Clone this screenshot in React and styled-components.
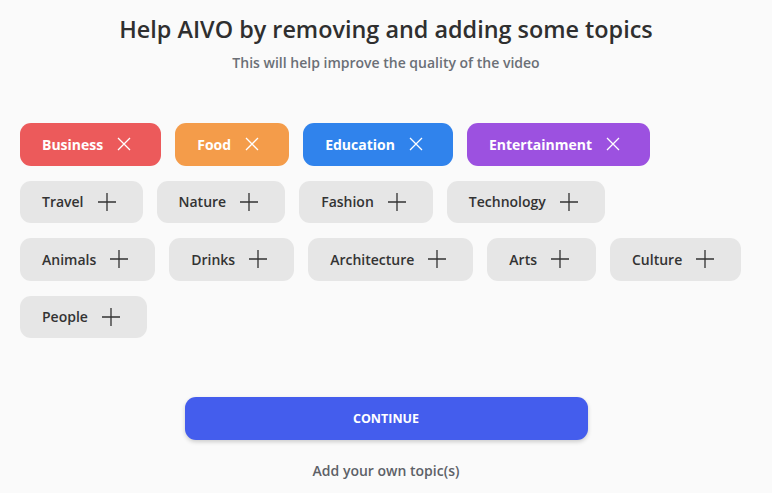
import React from 'react';
import styled, { createGlobalStyle } from 'styled-components';

const Global = createGlobalStyle`
  body {
    margin: 0;
    background: #fafafa;
    font-family: "Open Sans", "Noto Sans", sans-serif;
  }
`;

const Page = styled.div`
  width: 772px;
  height: 493px;
  padding: 14px 20px 0;
  box-sizing: border-box;
  display: flex;
  flex-direction: column;
`;

const Title = styled.h1`
  margin: 0;
  text-align: center;
  font-size: 23.4px;
  line-height: 30px;
  font-weight: 600;
  color: #2f2f2f;
`;

const Subtitle = styled.p`
  margin: 9px 0 0;
  text-align: center;
  font-size: 14px;
  line-height: 20px;
  font-weight: 600;
  color: #6b6f76;
`;

const Chips = styled.div`
  margin-top: 50px;
  display: flex;
  flex-wrap: wrap;
  gap: 15px 14px;
  width: 725px;
`;

const Chip = styled.button`
  height: 42.5px;
  box-sizing: border-box;
  padding: 0 ${(p) => (p.$color ? 30 : 27)}px 0 22px;
  border: none;
  border-radius: 11px;
  display: flex;
  align-items: center;
  gap: 14px;
  font-family: inherit;
  font-size: 14px;
  font-weight: ${(p) => (p.$color ? 700 : 600)};
  color: ${(p) => (p.$color ? '#ffffff' : '#333333')};
  background: ${(p) => p.$color || '#e6e6e6'};
`;

const Footer = styled.div`
  margin-top: 59px;
  display: flex;
  flex-direction: column;
  align-items: center;
`;

const ContinueBtn = styled.button`
  width: 403px;
  height: 43px;
  border: none;
  border-radius: 11px;
  background: #445ded;
  box-shadow: 0 2px 4px rgba(0, 0, 0, 0.18);
  color: #ffffff;
  font-family: inherit;
  font-size: 12.5px;
  font-weight: 700;
`;

const AddOwn = styled.div`
  margin-top: 21px;
  font-size: 14px;
  line-height: 20px;
  font-weight: 600;
  color: #5d6167;
`;

const CloseIcon = () => (
  <svg width="14" height="14" viewBox="0 0 14 14" fill="none">
    <path d="M1 1L13 13M13 1L1 13" stroke="#fff" strokeWidth="1.3" />
  </svg>
);

const PlusIcon = () => (
  <svg width="18" height="18" viewBox="0 0 18 18" fill="none">
    <path d="M9 0V18M0 9H18" stroke="#333" strokeWidth="1.3" />
  </svg>
);

const selected = [
  { name: 'Business', color: '#ec5a5b' },
  { name: 'Food', color: '#f49c4a' },
  { name: 'Education', color: '#3083ec' },
  { name: 'Entertainment', color: '#9c51e0' },
];

const others = [
  'Travel',
  'Nature',
  'Fashion',
  'Technology',
  'Animals',
  'Drinks',
  'Architecture',
  'Arts',
  'Culture',
  'People',
];

export default function App() {
  return (
    <>
      <Global />
      <Page>
        <Title>Help AIVO by removing and adding some topics</Title>
        <Subtitle>This will help improve the quality of the video</Subtitle>
        <Chips>
          {selected.map((t) => (
            <Chip key={t.name} $color={t.color}>
              {t.name}
              <CloseIcon />
            </Chip>
          ))}
          {others.map((t) => (
            <Chip key={t}>
              {t}
              <PlusIcon />
            </Chip>
          ))}
        </Chips>
        <Footer>
          <ContinueBtn>CONTINUE</ContinueBtn>
          <AddOwn>Add your own topic(s)</AddOwn>
        </Footer>
      </Page>
    </>
  );
}
